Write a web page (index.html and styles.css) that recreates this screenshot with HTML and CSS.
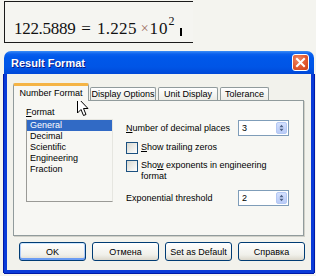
FILE: index.html
```html
<!DOCTYPE html>
<html>
<head>
<meta charset="utf-8">
<link rel="stylesheet" href="styles.css">
</head>
<body>
<div class="formula-box">
  <div class="formula"><span class="n1">122.5889</span><span class="eq">=</span><span class="n2">1.225</span><span class="times">×</span><span class="ten">10</span><span class="sup">2</span><span class="caret"></span></div>
</div>
<div class="dialog">
  <div class="titlebar">
    <span class="title">Result Format</span>
    <span class="close"><svg width="15" height="15" viewBox="0 0 15 15"><path d="M4 4 L11 11 M11 4 L4 11" stroke="#fff" stroke-width="2" stroke-linecap="square"/></svg></span>
  </div>
  <div class="body">
    <div class="tabs">
      <div class="tab active">Number Format</div>
      <div class="tab t-display">Display Options</div>
      <div class="tab t-unit">Unit Display</div>
      <div class="tab t-tol">Tolerance</div>
    </div>
    <div class="panel">
      <div class="col-left">
        <div class="label"><u>F</u>ormat</div>
        <ul class="listbox">
          <li class="sel">General</li>
          <li>Decimal</li>
          <li>Scientific</li>
          <li>Engineering</li>
          <li>Fraction</li>
        </ul>
      </div>
      <div class="col-right">
        <div class="row">
          <span><u>N</u>umber of decimal places</span>
          <div class="spin"><span>3</span><span class="spinbtn"><svg width="11" height="12" viewBox="0 0 11 12"><path d="M5.5 2 L8 5 L3 5 Z M3 7 L8 7 L5.5 10 Z" fill="#4d6185"/></svg></span></div>
        </div>
        <div class="check c1"><span class="box"></span><span class="clabel"><u>S</u>how trailing zeros</span></div>
        <div class="check c2"><span class="box"></span><span class="clabel">Sho<u>w</u> exponents in engineering<br>format</span></div>
        <div class="row r2">
          <span>Exponential threshold</span>
          <div class="spin"><span>2</span><span class="spinbtn"><svg width="11" height="12" viewBox="0 0 11 12"><path d="M5.5 2 L8 5 L3 5 Z M3 7 L8 7 L5.5 10 Z" fill="#4d6185"/></svg></span></div>
        </div>
      </div>
    </div>
    <div class="buttons">
      <div class="btn default">OK</div>
      <div class="btn">Отмена</div>
      <div class="btn">Set as Default</div>
      <div class="btn">Справка</div>
    </div>
  </div>
</div>
<svg class="pointer" width="13" height="20" viewBox="0 0 13 20"><path d="M0.5 0.5 L0.5 16 L4 12.5 L6.5 18.5 L9 17.5 L6.5 11.5 L11 11.5 Z" fill="#fff" stroke="#000" stroke-width="1"/></svg>
</body>
</html>
```

FILE: styles.css
```css
html, body {
  margin: 0;
  padding: 0;
}
body {
  width: 316px;
  height: 276px;
  overflow: hidden;
  background: #f4f4ef;
  font-family: "Liberation Sans", Arial, sans-serif;
  font-size: 9px;
  color: #000;
  position: relative;
}
.formula-box {
  margin: 1px 0 0 4px;
  width: 189px;
  height: 42px;
  box-sizing: border-box;
  border: 1px solid #1a1a1a;
  border-right: none;
  background: #f5f5f1;
}
.formula {
  font-family: "Liberation Serif", "Times New Roman", serif;
  font-size: 17px;
  line-height: 20px;
  padding: 13px 0 0 9px;
  white-space: nowrap;
  color: #111;
}
.formula span { display: inline-block; }
.n1 { letter-spacing: -0.3px; }
.eq { margin-left: 6px; }
.n2 { margin-left: 6px; letter-spacing: 0.3px; }
.times { margin-left: 4px; margin-right: 1px; font-size: 14px; color: #9a6a5a; vertical-align: 1px; }
.ten { letter-spacing: 1px; }
.sup { font-size: 12px; vertical-align: 9px; line-height: 12px; }
.caret {
  width: 2px;
  height: 8px;
  background: #000;
  margin-left: 5px;
  vertical-align: -2px;
}
.dialog {
  margin: 8px 0 0 4px;
  width: 310px;
  height: 222px;
  display: flex;
  flex-direction: column;
}
.titlebar {
  height: 23px;
  flex: none;
  box-sizing: border-box;
  border-radius: 7px 7px 0 0;
  background: linear-gradient(#3a8cf5 0, #0a60ee 3px, #0058ea 6px, #0055e6 70%, #0048d8 100%);
  display: flex;
  align-items: center;
  justify-content: space-between;
  padding: 0 5px 0 7px;
}
.title {
  color: #fff;
  font-weight: bold;
  font-size: 11px;
  text-shadow: 1px 1px #0a1a88;
}
.close {
  width: 17px;
  height: 17px;
  box-sizing: border-box;
  border: 1px solid #fff;
  border-radius: 3px;
  background: radial-gradient(circle at 35% 30%, #f08a68 0, #e2582e 55%, #c8401c 100%);
  display: flex;
  align-items: center;
  justify-content: center;
}
.body {
  flex: 1;
  border: 3px solid #0a3bd8;
  border-top: none;
  box-shadow: 1px 0 0 #0019a8, -1px 0 0 #0019a8, 0 1px 0 #0019a8;
  background: #f2f2ec;
  padding: 9px 0 0 6px;
}
.tabs {
  display: flex;
  align-items: flex-end;
  height: 17px;
}
.tab {
  box-sizing: border-box;
  height: 13px;
  border: 1px solid #919b9c;
  border-bottom: none;
  border-radius: 2px 2px 0 0;
  background: linear-gradient(#ffffff, #ecebe5);
  display: flex;
  align-items: center;
  justify-content: center;
  line-height: 11px;
  white-space: nowrap;
}
.tab.active {
  width: 76px;
  height: 18px;
  margin-bottom: -1px;
  position: relative;
  z-index: 1;
  background: #f7f7f3;
  border-top: 3px solid #f5b445;
  padding-bottom: 1px;
}
.t-display { width: 66px; margin-left: 1px; }
.t-unit { width: 60px; margin-left: 2px; }
.t-tol { width: 49px; margin-left: 2px; }
.panel {
  width: 291px;
  height: 136px;
  box-sizing: border-box;
  border: 1px solid #919b9c;
  box-shadow: 1px 1px 0 #d0d0c8;
  background: #f7f7f3;
  display: flex;
  padding: 6px 0 0 12px;
}
.col-left { width: 87px; }
.label { height: 11px; line-height: 11px; }
.listbox {
  list-style: none;
  margin: 1px 0 0 0;
  padding: 0;
  width: 87px;
  height: 83px;
  box-sizing: border-box;
  border: 1px solid #e6e6e0;
  border-left-color: #9a9a96;
  border-bottom-color: #9a9a96;
}
.listbox li {
  height: 11px;
  line-height: 11px;
  padding-left: 3px;
}
.listbox li.sel {
  background: #316ac5;
  color: #fff;
}
.col-right {
  margin-left: 13px;
  width: 163px;
  padding-top: 13px;
}
.row {
  display: flex;
  align-items: center;
  justify-content: space-between;
  height: 16px;
}
.r2 { margin-top: 8px; }
.spin {
  width: 51px;
  height: 16px;
  box-sizing: border-box;
  border: 1px solid #7f9db9;
  background: #fff;
  display: flex;
  align-items: center;
  justify-content: space-between;
  padding: 0 1px 0 3px;
}
.spinbtn {
  width: 11px;
  height: 12px;
  border-radius: 2px;
  background: linear-gradient(#d4e0fd, #b9cbf7);
  border: 1px solid #b4c8f4;
  box-sizing: border-box;
  display: flex;
  align-items: center;
  justify-content: center;
}
.spinbtn svg { display: block; }
.check {
  display: flex;
  align-items: flex-start;
  gap: 3px;
  line-height: 11px;
}
.c1 { margin-top: 6px; }
.c2 { margin-top: 6px; }
.box {
  flex: none;
  width: 12px;
  height: 12px;
  box-sizing: border-box;
  border: 1px solid #1c5180;
  background: linear-gradient(135deg, #d8d8d0, #ffffff);
}
.buttons {
  display: flex;
  gap: 6px;
  margin: 6px 0 0 6px;
}
.btn {
  width: 67px;
  height: 19px;
  box-sizing: border-box;
  border: 1px solid #003c74;
  border-radius: 3px;
  background: linear-gradient(#ffffff, #f0f0ea 70%, #dcd8cc);
  display: flex;
  align-items: center;
  justify-content: center;
}
.btn.default {
  box-shadow: inset 0 1px 0 #cee7ff, inset 0 -2px 0 #6b9cf3, inset 1px 0 0 #b0ccf8, inset -1px 0 0 #b0ccf8;
}
.pointer {
  position: absolute;
  left: 77px;
  top: 97px;
}
```
